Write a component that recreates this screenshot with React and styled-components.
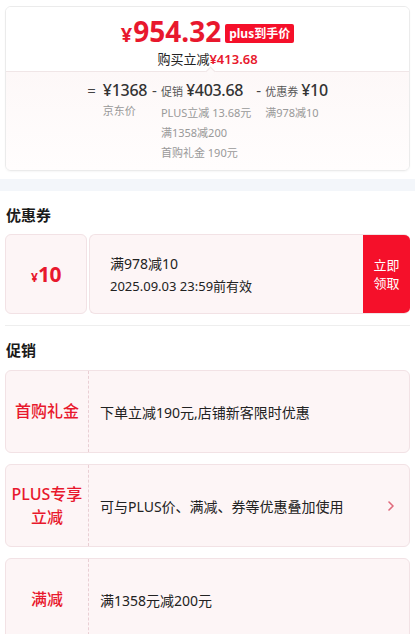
import styled, { createGlobalStyle } from 'styled-components';

const red = '#e8182d';
const brightRed = '#f5102a';
const pinkBg = '#fdf5f6';
const pinkBorder = '#f2e2e5';

const GlobalStyle = createGlobalStyle`
    body {
        margin: 0;
        background: #ffffff;
        font-family: "Noto Sans", "Noto Sans CJK SC", sans-serif;
        color: #222;
    }
`;

const Page = styled.div`
    width: 415px;
    display: flex;
    flex-direction: column;
`;

const Section = styled.div`
    padding: 0 5px;
    display: flex;
    flex-direction: column;
`;

const PriceCard = styled.div`
    margin-top: 6px;
    border: 1px solid #ebebeb;
    border-radius: 6px;
    overflow: hidden;
    box-shadow: 0 1px 2px rgba(0,0,0,0.04);
`;

const PriceTop = styled.div`
    background: #fff;
    height: 65px;
    display: flex;
    flex-direction: column;
    align-items: center;
    padding-top: 10px;
    box-sizing: border-box;
    border-bottom: 1px solid #f0e6e7;
    position: relative;

    &::after {
        content: '';
        position: absolute;
        left: 201px;
        bottom: -4px;
        width: 6px;
        height: 6px;
        background: #fdf9f9;
        border-left: 1px solid #f0e6e7;
        border-top: 1px solid #f0e6e7;
        transform: rotate(45deg);
    }
`;

const PriceRow = styled.div`
    display: flex;
    align-items: baseline;
    height: 28px;
    line-height: 28px;
    color: ${red};
    font-weight: 700;
`;

const Yen = styled.span`
    font-size: ${(p) => p.size}px;
    font-weight: 700;
    color: ${red};
    margin-right: ${(p) => p.gap || 0}px;
`;

const BigPrice = styled.span`
    font-size: 28px;
    letter-spacing: 0;
`;

const PlusBadge = styled.span`
    align-self: center;
    margin-left: 4px;
    margin-top: 4px;
    background: ${brightRed};
    color: #fff;
    font-size: 12px;
    font-weight: 700;
    padding: 0 4px;
    height: 19px;
    line-height: 19px;
    border-radius: 2px;
`;

const SaveLine = styled.div`
    margin-top: 6px;
    font-size: 13px;
    color: #222;
    line-height: 17px;

    b {
        color: ${red};
        font-weight: 600;
    }
`;

const PriceBottom = styled.div`
    background: linear-gradient(#fdf8f8, #fffdfd);
    display: flex;
    justify-content: center;
    gap: 5px;
    padding: 7px 0 7px;
`;

const Column = styled.div`
    display: flex;
    gap: ${(p) => p.gap}px;
`;

const Op = styled.span`
    font-size: 15px;
    color: #444;
    line-height: 22px;
`;

const ColBody = styled.div`
    display: flex;
    flex-direction: column;
`;

const Head = styled.div`
    display: flex;
    align-items: baseline;
    gap: 3px;
    line-height: 22px;
    font-size: 16px;
    letter-spacing: -0.3px;
    color: #333;
    font-weight: 500;
`;

const HeadLabel = styled.span`
    font-size: 11px;
    letter-spacing: 0;
    color: #555;
    font-weight: 400;
`;

const Sub = styled.div`
    font-size: 11px;
    color: #999;
    line-height: 20px;
`;

const Band = styled.div`
    height: 12px;
    margin-top: 8px;
    background: #f3f6fa;
`;

const Title = styled.div`
    font-size: 15px;
    font-weight: 700;
    color: #1a1a1a;
    padding: 0 1px;
    line-height: 20px;
    margin: ${(p) => p.margin};
`;

const Coupon = styled.div`
    display: flex;
    gap: 2px;
    height: 80px;
`;

const CouponLeft = styled.div`
    width: 82px;
    background: ${pinkBg};
    border: 1px solid ${pinkBorder};
    border-radius: 6px;
    box-sizing: border-box;
    display: flex;
    align-items: baseline;
    justify-content: center;
    line-height: 78px;
    color: ${red};
    font-weight: 700;
`;

const CouponAmount = styled.span`
    font-size: 21px;
    letter-spacing: -0.5px;
`;

const CouponRight = styled.div`
    flex: 1;
    display: flex;
    background: ${pinkBg};
    border: 1px solid ${pinkBorder};
    border-right: none;
    border-radius: 6px;
    box-sizing: border-box;
    overflow: hidden;
`;

const CouponInfo = styled.div`
    flex: 1;
    display: flex;
    flex-direction: column;
    justify-content: center;
    padding-left: 20px;
    gap: 4px;
`;

const CouponRule = styled.div`
    font-size: 14px;
    color: #222;
    line-height: 19px;
`;

const CouponDate = styled.div`
    font-size: 13px;
    color: #222;
    line-height: 18px;
`;

const GetButton = styled.div`
    width: 47px;
    background: ${brightRed};
    color: #fff;
    font-size: 13px;
    line-height: 18px;
    display: flex;
    flex-direction: column;
    align-items: center;
    justify-content: center;
    margin: -1px 0;
`;

const Divider = styled.div`
    height: 1px;
    background: #eeeeee;
    margin-top: 11px;
`;

const PromoList = styled.div`
    display: flex;
    flex-direction: column;
    gap: 11px;
`;

const PromoCard = styled.div`
    display: flex;
    height: 83px;
    background: ${pinkBg};
    border: 1px solid ${pinkBorder};
    border-radius: 6px;
    box-sizing: border-box;
    flex-shrink: 0;
`;

const PromoLabel = styled.div`
    width: 82px;
    flex-shrink: 0;
    border-right: 1px dashed #e9cfd4;
    display: flex;
    align-items: center;
    justify-content: center;
    text-align: center;
    color: ${red};
    font-size: 16px;
    font-weight: 500;
    line-height: 23px;
`;

const PromoText = styled.div`
    flex: 1;
    display: flex;
    align-items: center;
    padding-left: 11px;
    font-size: 14px;
    color: #222;
`;

const Chevron = styled.svg`
    margin: 0 14px 0 auto;
`;

const promos = [
    { label: '首购礼金', text: '下单立减190元,店铺新客限时优惠' },
    { label: <>PLUS专享<br />立减</>, text: '可与PLUS价、满减、券等优惠叠加使用', more: true },
    { label: '满减', text: '满1358元减200元' },
];

function App() {
    return (
        <Page>
            <GlobalStyle />
            <Section>
                <PriceCard>
                    <PriceTop>
                        <PriceRow>
                            <Yen size={20} gap={1}>¥</Yen>
                            <BigPrice>954.32</BigPrice>
                            <PlusBadge>plus到手价</PlusBadge>
                        </PriceRow>
                        <SaveLine>购买立减<b>¥413.68</b></SaveLine>
                    </PriceTop>
                    <PriceBottom>
                        <Column gap={7}>
                            <Op>=</Op>
                            <ColBody>
                                <Head>¥1368</Head>
                                <Sub>京东价</Sub>
                            </ColBody>
                        </Column>
                        <Column gap={4}>
                            <Op>-</Op>
                            <ColBody>
                                <Head><HeadLabel>促销</HeadLabel>¥403.68</Head>
                                <Sub>PLUS立减 13.68元</Sub>
                                <Sub>满1358减200</Sub>
                                <Sub>首购礼金 190元</Sub>
                            </ColBody>
                        </Column>
                        <Column gap={4}>
                            <Op>-</Op>
                            <ColBody>
                                <Head><HeadLabel>优惠券</HeadLabel>¥10</Head>
                                <Sub>满978减10</Sub>
                            </ColBody>
                        </Column>
                    </PriceBottom>
                </PriceCard>
            </Section>
            <Band />
            <Section>
                <Title margin="14px 0 9px">优惠券</Title>
                <Coupon>
                    <CouponLeft>
                        <Yen size={12}>¥</Yen>
                        <CouponAmount>10</CouponAmount>
                    </CouponLeft>
                    <CouponRight>
                        <CouponInfo>
                            <CouponRule>满978减10</CouponRule>
                            <CouponDate>2025.09.03 23:59前有效</CouponDate>
                        </CouponInfo>
                        <GetButton>
                            <span>立即</span>
                            <span>领取</span>
                        </GetButton>
                    </CouponRight>
                </Coupon>
                <Divider />
                <Title margin="14px 0 10px">促销</Title>
                <PromoList>
                    {promos.map((p, i) => (
                        <PromoCard key={i}>
                            <PromoLabel>{p.label}</PromoLabel>
                            <PromoText>
                                {p.text}
                                {p.more && (
                                    <Chevron width="8" height="12" viewBox="0 0 8 12">
                                        <polyline points="2,2 6,6 2,10" fill="none" stroke="#e06a7c" strokeWidth="1.6" strokeLinecap="round" strokeLinejoin="round" />
                                    </Chevron>
                                )}
                            </PromoText>
                        </PromoCard>
                    ))}
                </PromoList>
            </Section>
        </Page>
    );
}

export default App;
